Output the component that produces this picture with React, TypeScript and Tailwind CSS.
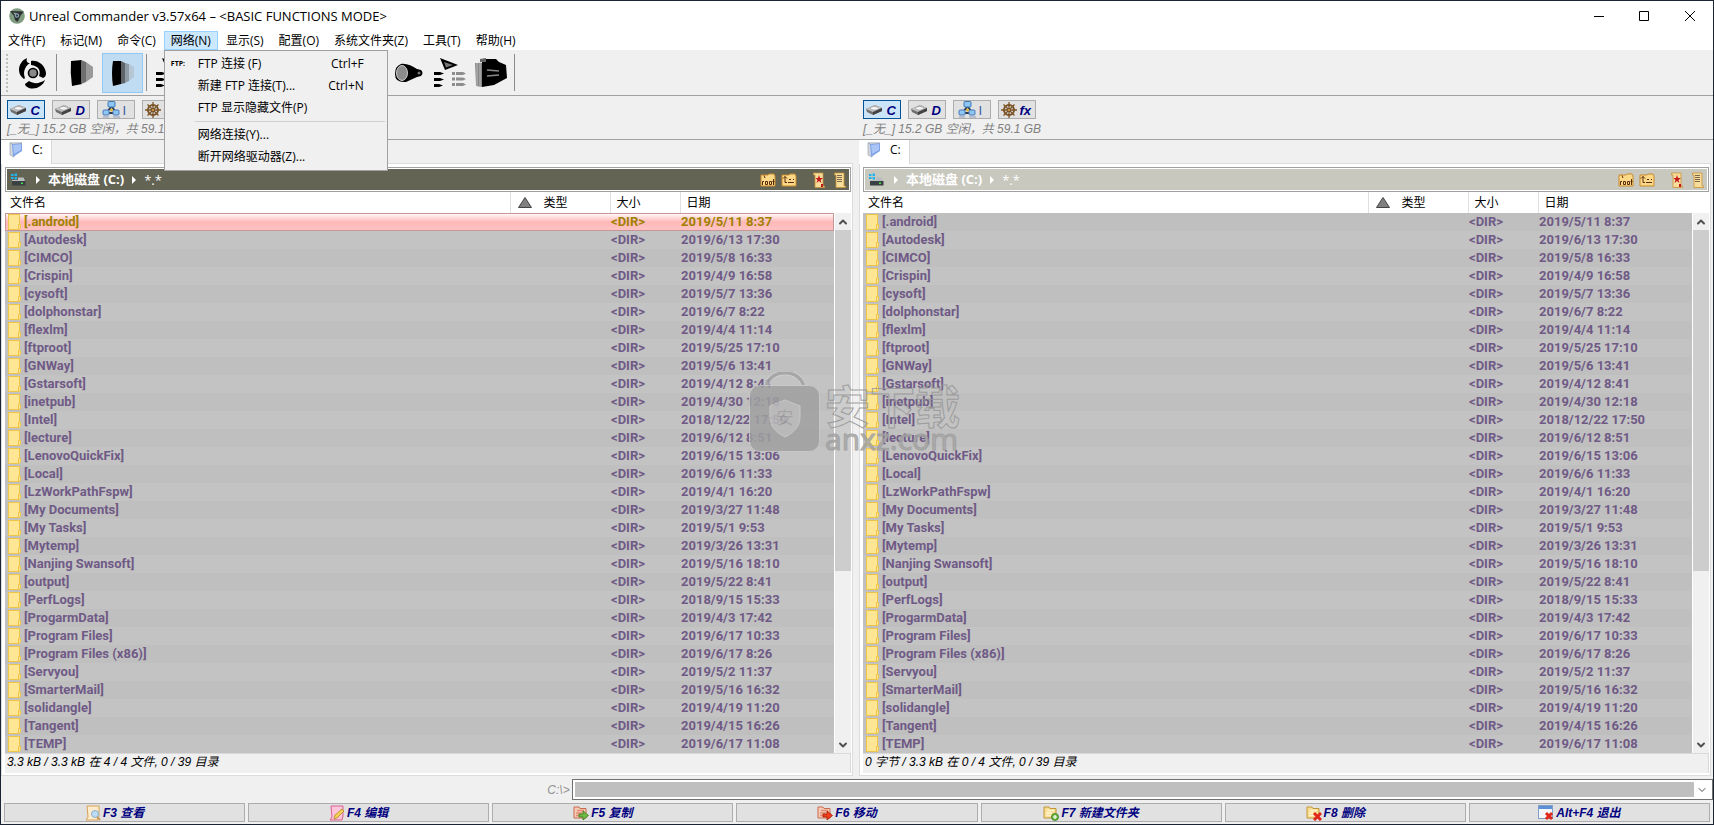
import { ChevronDown, ChevronUp } from 'lucide-react';
import React from 'react';

const menus = [
  '文件(F)',
  '标记(M)',
  '命令(C)',
  '网络(N)',
  '显示(S)',
  '配置(O)',
  '系统文件夹(Z)',
  '工具(T)',
  '帮助(H)',
];

const folders = [
  ['.android', '2019/5/11 8:37'],
  ['Autodesk', '2019/6/13 17:30'],
  ['CIMCO', '2019/5/8 16:33'],
  ['Crispin', '2019/4/9 16:58'],
  ['cysoft', '2019/5/7 13:36'],
  ['dolphonstar', '2019/6/7 8:22'],
  ['flexlm', '2019/4/4 11:14'],
  ['ftproot', '2019/5/25 17:10'],
  ['GNWay', '2019/5/6 13:41'],
  ['Gstarsoft', '2019/4/12 8:41'],
  ['inetpub', '2019/4/30 12:18'],
  ['Intel', '2018/12/22 17:50'],
  ['lecture', '2019/6/12 8:51'],
  ['LenovoQuickFix', '2019/6/15 13:06'],
  ['Local', '2019/6/6 11:33'],
  ['LzWorkPathFspw', '2019/4/1 16:20'],
  ['My Documents', '2019/3/27 11:48'],
  ['My Tasks', '2019/5/1 9:53'],
  ['Mytemp', '2019/3/26 13:31'],
  ['Nanjing Swansoft', '2019/5/16 18:10'],
  ['output', '2019/5/22 8:41'],
  ['PerfLogs', '2018/9/15 15:33'],
  ['ProgarmData', '2019/4/3 17:42'],
  ['Program Files', '2019/6/17 10:33'],
  ['Program Files (x86)', '2019/6/17 8:26'],
  ['Servyou', '2019/5/2 11:37'],
  ['SmarterMail', '2019/5/16 16:32'],
  ['solidangle', '2019/4/19 11:20'],
  ['Tangent', '2019/4/15 16:26'],
  ['TEMP', '2019/6/17 11:08'],
];

function AppIcon() {
  return (
    <svg width="16" height="16" viewBox="0 0 16 16">
      <circle cx="8" cy="8" r="7.8" fill="#7f9c80" />
      <path d="M1 3 15 3.500 12 7 8.500 14 6 12 5 8Z" fill="#2b3133" />
      <path d="M4 4.500 8 5 6 7Z" fill="#8fa892" />
      <circle cx="8" cy="7.5" r="2.2" fill="#8aa0a8" />
      <circle cx="8" cy="7.5" r="1" fill="#20384a" />
    </svg>
  );
}

function SwirlIcon() {
  return (
    <svg width="28" height="32" viewBox="0 0 28 32">
      <path d="M8 1C3 3 0 8 0 13c0 4 2 7 5 9l1-1C4 16 5 10 11 6 8 6 7 4 8 1Z" />
      <path d="M12 4c7-1 14 4 15 12 0 3-1 4-3 5l-4-2c2-5 0-10-8-11Z" />
      <path d="M26 23c-2 6-9 10-16 8-3-1-4-3-4-4l4-3c5 3 10 3 16-1Z" />
      <circle cx="14" cy="16" r="4.5" fill="#888" stroke="#000" strokeWidth="1.6" />
    </svg>
  );
}

function LensIcon() {
  return (
    <svg width="24" height="28" viewBox="0 0 24 28">
      <path d="M1 2Q0 14 2 27L12 25V1Z" />
      <path d="M11 1 16 3V23L11 25Z" fill="#6f6f6f" />
      <path d="M16 3 23 8V18L16 23Z" fill="#999" />
    </svg>
  );
}

function LensActiveIcon() {
  return (
    <svg width="24" height="28" viewBox="0 0 24 28">
      <path d="M2 2Q0 14 2 27L10 25V2Z" />
      <path d="M10 2 14 4V24L10 25Z" fill="#5f6468" />
      <path d="M14 4 18 5V22L14 24Z" fill="#8f9ba5" />
      <path d="M18 5 23 8V18L18 22Z" fill="#b5c6d4" />
    </svg>
  );
}

function TorchIcon() {
  return (
    <svg width="30" height="20" viewBox="0 0 30 20">
      <path d="M7 1C12 0 18 3 23 6L27 7Q30 10 27 13L23 14 12 19Q1 20 1 11 1 3 7 1Z" />
      <ellipse cx="8" cy="10" rx="5.5" ry="7.5" fill="#8c8c8c" stroke="#eee" strokeWidth="0.8" />
      <circle cx="25" cy="10" r="1.5" fill="#777" />
    </svg>
  );
}

function ListsIcon() {
  return (
    <svg width="34" height="30" viewBox="0 0 34 30">
      <path d="M7 0 25 7 12 12Z" />
      <path d="M11 4 20 7 13 9.500Z" fill="#777" />
      <path d="M1 14H7L11 15.500 7 17H1V15.500ZM1 20H7L11 21.500 7 23H1ZM1 26H6L10 27.500 6 29H1Z" />
      <path
        d="M19 14h3v3h-3ZM23 14h7l3 1.500-3 1.500h-7ZM19 19.500h3v3h-3ZM23 19.500h7l3 1.500-3 1.500h-7ZM19 25h3v3h-3ZM23 25h7l3 1.500-3 1.500h-7Z"
        fill="#8e8e8e"
      />
    </svg>
  );
}

function BagIcon() {
  return (
    <svg width="34" height="30" viewBox="0 0 34 30">
      <path d="M1 5H8V29L2 28Z" fill="#888" />
      <path d="M3 5V28M6 4V29" stroke="#bbb" />
      <path d="M8 4 12 1H22L25 4 32 7 33 20 20 27 8 29Z" />
      <path d="M6 1 12 0V4H6Z" fill="#666" />
      <path d="M13 12 25 13M13 18 25 17" stroke="#888" strokeWidth="1.6" />
    </svg>
  );
}

function DriveIcon() {
  return (
    <svg width="17" height="12" viewBox="0 0 17 12">
      <path d="M0 5 9 1 16 4V7L7 11 1 8Z" fill="#6f6f6f" />
      <path d="M0 5 9 1 16 4 7 8Z" fill="#c4c4c4" />
      <ellipse cx="8.500" cy="4.300" rx="4" ry="1.800" fill="#f5f5f5" stroke="#8c8c8c" strokeWidth="0.600" />
      <path d="M7 8 16 4V7L7 11Z" fill="#444" />
    </svg>
  );
}

function NetIcon() {
  return (
    <svg width="18" height="17" viewBox="0 0 18 17">
      <path d="M9 6 5 11M10 6 14 11M6 12H14" stroke="#2b3d4f" strokeWidth="2" />
      <rect x="6" y="0.500" width="7" height="5.500" rx="1" fill="#8ec5f2" stroke="#3d78b5" />
      <rect x="1" y="9" width="6" height="5" rx="1" fill="#8ec5f2" stroke="#4a7ab8" />
      <rect x="11" y="9" width="6" height="5" rx="1" fill="#8ec5f2" stroke="#4a7ab8" />
      <path d="M1 16H7M11 16H18" stroke="#aab4c8" strokeWidth="1.500" />
      <circle cx="9.500" cy="9" r="1.500" fill="#e0b030" />
    </svg>
  );
}

function WheelIcon() {
  return (
    <svg width="16" height="16" viewBox="0 0 16 16" fill="none" stroke="#7a5326">
      <path d="M8 0V16M0 8H16M2.500 2.500 13.500 13.500M13.500 2.500 2.500 13.500" strokeWidth="1.300" />
      <circle cx="8" cy="8" r="5" strokeWidth="2" />
      <circle cx="8" cy="8" r="1.600" fill="#d09a50" />
    </svg>
  );
}

function TabIcon() {
  return (
    <svg width="15" height="16" viewBox="0 0 15 16">
      <path d="M1 1 5 3V15L1 13Z" fill="#d5d8dd" stroke="#9aa3ad" strokeWidth="0.700" />
      <path d="M3 2 13 1V9L4 15Z" fill="#7ea2e8" />
      <path d="M4 3 12 2V8L5 12Z" fill="#a9c4f5" />
      <path d="M1 1H13" stroke="#9aa3ad" />
    </svg>
  );
}

function SystemDriveIcon() {
  return (
    <svg width="15" height="13" viewBox="0 0 15 13">
      <path d="M0 1h2.500v2H0ZM3.500 0.500H6V3H3.500ZM0 4h2.500v2H0ZM3.500 4H6v2.500H3.500Z" fill="#20b4ee" />
      <path d="M7 4.500H12.500L14 8H1V7H7Z" fill="#b9bdbf" />
      <path d="M1 8H14.500V12.500H1Z" fill="#3a3f42" />
      <path d="M10 9.500h2v1.500h-2Z" fill="#46e052" />
    </svg>
  );
}

function FolderButtonIcon({ up }: { up?: boolean }) {
  return (
    <svg width="16" height="14" viewBox="0 0 16 14">
      <path d="M1 2H8L9 1H14L15 3V13H1Z" fill="#fbd989" stroke="#c98a2c" />
      {up ? (
        <path d="M4 9.500V3.500M2 5.500 4 3.500 6 5.500M4 9.500H6M8 6.500h2M12 6.500h1M7 9.500h6" stroke="#5b2a08" fill="none" />
      ) : (
        <path
          d="M4 2.500 5 5M2.500 12V8.500H4M5.500 8.500h2v3h-2ZM9.500 8.500h2v3h-2ZM13.500 6v6M12.500 8.500h2"
          stroke="#5b2a08"
          fill="none"
        />
      )}
    </svg>
  );
}

function ScrollIcon({ star }: { star?: boolean }) {
  return (
    <svg width="12" height="16" viewBox="0 0 12 16">
      <path d="M0.500 1H10V14H11.500V15.500H2V3H0.500Z" fill="#f7dc9a" stroke="#c7923a" strokeWidth="0.800" />
      {star ? (
        <path d="M6 3 7 6 10 6 7.500 8 8.500 11 6 9 3.500 11 4.500 8 2.500 6 5 6ZM8 12h2v3H8Z" fill="#c4141c" />
      ) : (
        <path d="M3 3.500H8M3 5.500H8M3 7.500H8M3 9.500H8" stroke="#7a6648" />
      )}
    </svg>
  );
}

function FolderIcon() {
  return (
    <svg className="shrink-0" width="13" height="16" viewBox="0 0 13 16">
      <rect x="0.500" y="0.500" width="11" height="15" fill="#ffe694" stroke="#eec549" />
      <path d="M10.500 15.500V10.500H12.500V14L11.500 15.500Z" fill="#ffe694" stroke="#eec549" />
    </svg>
  );
}

function PageIcon({ edit }: { edit?: boolean }) {
  return (
    <svg width="16" height="16" viewBox="0 0 16 16">
      <path
        d="M2 1H14V11L13 15H1L3 12Z"
        fill={edit ? '#fbc6da' : '#fdeccb'}
        stroke={edit ? '#dc5f95' : '#d6a25c'}
      />
      {edit ? (
        <path d="M5 14 6 10 13 4 15 6 8 13Z" fill="#f3cf58" stroke="#b38a28" strokeWidth="0.800" />
      ) : (
        <>
          <circle cx="10" cy="9" r="3.500" fill="#bcdcf5" stroke="#8fb1cc" />
          <path d="M12 12 15 15" stroke="#c79a5c" strokeWidth="2" />
        </>
      )}
    </svg>
  );
}

function FileOpIcon({ kind }: { kind: string }) {
  const red = kind === 'copy' || kind === 'move';
  return (
    <svg width="16" height="16" viewBox="0 0 16 16">
      <path
        d="M1 2H6L7 3.500H13V13H1Z"
        fill={red ? '#f6cbb8' : '#f8dc90'}
        stroke={red ? '#c96a4c' : '#c09638'}
      />
      <path d="M4 5.500H11M3 8H9M3 10.500H8" stroke={red ? '#e08a70' : '#fff3cf'} strokeWidth="1.500" />
      {kind === 'copy' && (
        <path d="M6 9H10V6L15.500 10.500 10 15V12H6Z" fill="#6dba44" stroke="#38761d" strokeWidth="0.800" />
      )}
      {kind === 'move' && (
        <path d="M6 9H10V6L15.500 10.500 10 15V12H6Z" fill="#f23c1c" stroke="#a01c08" strokeWidth="0.800" />
      )}
      {kind === 'new' && (
        <>
          <circle cx="12" cy="12" r="3.500" fill="#6dba44" stroke="#38761d" strokeWidth="0.800" />
          <path d="M12 10V14M10 12H14" stroke="#fff" strokeWidth="1.200" />
        </>
      )}
      {kind === 'delete' && <path d="M8 8 15 15M15 8 8 15" stroke="#e0281c" strokeWidth="3" />}
    </svg>
  );
}

function ExitIcon() {
  return (
    <svg width="16" height="16" viewBox="0 0 16 16">
      <rect x="0.500" y="0.500" width="14" height="13" fill="#f4f8fd" stroke="#7f9fc9" />
      <path d="M1 1H14V4H1Z" fill="#5b8fd6" />
      <path d="M8 8 14 14M14 8 8 14" stroke="#e0281c" strokeWidth="3" />
    </svg>
  );
}

function TitleBar() {
  return (
    <header className="flex h-[30px] items-center bg-white pl-2">
      <AppIcon />
      <h1 className="ml-1 text-[13px] leading-5">Unreal Commander v3.57x64 – &lt;BASIC FUNCTIONS MODE&gt;</h1>
      <div className="ml-auto flex h-full">
        <button aria-label="最小化" className="grid w-[45px] place-items-center">
          <svg width="10" height="10" viewBox="0 0 10 10">
            <path d="M0 5.500H10" stroke="#000" />
          </svg>
        </button>
        <button aria-label="最大化" className="grid w-[45px] place-items-center">
          <svg width="10" height="10" viewBox="0 0 10 10">
            <path d="M0.500 0.500H9.500V9.500H0.500Z" fill="none" stroke="#000" />
          </svg>
        </button>
        <button aria-label="关闭" className="grid w-[47px] place-items-center">
          <svg width="10" height="10" viewBox="0 0 10 10">
            <path d="M0 0 10 10M10 0 0 10" stroke="#000" />
          </svg>
        </button>
      </div>
    </header>
  );
}

function MenuItem({ label, shortcut, icon }: { label: string; shortcut?: string; icon?: string }) {
  return (
    <li>
      <button className="flex h-[22px] w-full items-center pr-[23px]">
        <span className="w-[33px] pl-1.5 text-left text-[7px] font-bold">{icon}</span>
        {label}
        <span className="ml-auto">{shortcut}</span>
      </button>
    </li>
  );
}

function NetworkMenu() {
  return (
    <ul className="absolute top-full left-0 z-20 w-56 border border-[#a0a0a0] bg-[#f0f0f0] py-0.5 whitespace-nowrap">
      <MenuItem label="FTP 连接 (F)" shortcut="Ctrl+F" icon="FTP:" />
      <MenuItem label="新建 FTP 连接(T)..." shortcut="Ctrl+N" />
      <MenuItem label="FTP 显示隐藏文件(P)" />
      <li className="my-0.5 mr-0.5 ml-[30px] border-t border-[#d0d0d0]" />
      <MenuItem label="网络连接(Y)..." />
      <MenuItem label="断开网络驱动器(Z)..." />
    </ul>
  );
}

function MenuBar() {
  return (
    <nav className="flex h-[19px] gap-px bg-white text-xs">
      {menus.map((menu) => {
        const open = menu === '网络(N)';
        return (
          <div key={menu} className="relative flex">
            <button
              className={
                open
                  ? 'border border-[#99d1ff] bg-[#cce8ff] px-1.5 leading-4'
                  : 'border border-transparent px-1.5 leading-4'
              }
            >
              {menu}
            </button>
            {open && <NetworkMenu />}
          </div>
        );
      })}
    </nav>
  );
}

function ToolButton({ label, active, children }: { label: string; active?: boolean; children: React.ReactNode }) {
  return (
    <button
      aria-label={label}
      className={
        active
          ? 'grid h-10 w-[41px] place-items-center border border-[#90c8f6] bg-[#c0dcf3]'
          : 'grid h-10 w-[41px] place-items-center'
      }
    >
      {children}
    </button>
  );
}

function Separator() {
  return <div className="mr-1 ml-[3px] h-[37px] w-px bg-[#8c8c8c]" />;
}

function ToolBar() {
  return (
    <div className="flex h-[46px] items-center border-b border-[#a0a0a0] pl-[5px]">
      <div className="mr-1 h-[38px] border-l-2 border-dotted border-[#bdbdbd]" />
      <ToolButton label="刷新">
        <SwirlIcon />
      </ToolButton>
      <Separator />
      <ToolButton label="简要">
        <LensIcon />
      </ToolButton>
      <ToolButton label="详细" active>
        <LensActiveIcon />
      </ToolButton>
      <Separator />
      <ToolButton label="排序">
        <ListsIcon />
      </ToolButton>
      <ToolButton label="打包">
        <BagIcon />
      </ToolButton>
      <Separator />
      <ToolButton label="解包">
        <BagIcon />
      </ToolButton>
      <Separator />
      <ToolButton label="比较">
        <ListsIcon />
      </ToolButton>
      <Separator />
      <ToolButton label="同步">
        <SwirlIcon />
      </ToolButton>
      <Separator />
      <ToolButton label="搜索">
        <TorchIcon />
      </ToolButton>
      <ToolButton label="批量重命名">
        <ListsIcon />
      </ToolButton>
      <ToolButton label="文件包">
        <BagIcon />
      </ToolButton>
      <Separator />
    </div>
  );
}

function DriveButton({ label, active, icon }: { label: string; active?: boolean; icon: React.ReactNode }) {
  return (
    <button
      className={
        active
          ? 'flex h-[19px] w-[38px] items-center justify-between border border-[#00549a] bg-[#cce4f7] pr-1 pl-0.5'
          : 'flex h-[19px] w-[38px] items-center justify-between border border-[#adadad] bg-[#e1e1e1] pr-1 pl-0.5'
      }
    >
      {icon}
      <span className="pt-0.5 text-[13px] leading-4 font-bold text-[#000080] italic">{label}</span>
    </button>
  );
}

function DriveBar() {
  return (
    <div className="h-11 border-b border-[#a0a0a0] pt-1 pl-1.5 font-['Liberation_Sans','Noto_Sans_CJK_SC',sans-serif]">
      <div className="flex gap-[7px]">
        <DriveButton label="C" active icon={<DriveIcon />} />
        <DriveButton label="D" icon={<DriveIcon />} />
        <button className="flex h-[19px] w-[38px] items-center justify-between border border-[#adadad] bg-[#e1e1e1] pr-2 pl-1">
          <NetIcon />
          <span className="pt-0.5 text-[13px] leading-4 text-[#3c5fa0]">I</span>
        </button>
        <DriveButton label="fx" icon={<WheelIcon />} />
      </div>
      <p className="text-xs leading-5 text-[#808080] italic">[_无_] 15.2 GB 空闲，共 59.1 GB</p>
    </div>
  );
}

function PathBar({ active }: { active?: boolean }) {
  return (
    <div className="border border-[#a0a0a0] bg-white p-px">
      <div
        className={
          active
            ? 'flex h-[21px] items-center bg-[#646454] pr-[3px] pl-1 text-white'
            : 'flex h-[21px] items-center bg-[#c8c8be] pr-[3px] pl-1 text-white'
        }
      >
        <SystemDriveIcon />
        <span className="ml-2.5 border-y-4 border-l-4 border-y-transparent border-l-white" />
        <span className="ml-2 pb-0.5 text-[13px] leading-4 font-bold">本地磁盘 (C:)</span>
        <span className="ml-2 border-y-4 border-l-4 border-y-transparent border-l-white" />
        <span className="ml-2 text-[13px] leading-4">*.*</span>
        <div className="ml-auto flex items-center">
          <button aria-label="根目录">
            <FolderButtonIcon />
          </button>
          <button aria-label="上级目录" className="ml-[5px]">
            <FolderButtonIcon up />
          </button>
          <button aria-label="收藏夹" className="ml-4">
            <ScrollIcon star />
          </button>
          <button aria-label="历史" className="ml-[9px]">
            <ScrollIcon />
          </button>
        </div>
      </div>
    </div>
  );
}

function FileList({ active }: { active?: boolean }) {
  return (
    <div className="flex bg-white">
      <table className="w-full flex-1 table-fixed border-collapse text-left font-['Roboto','Noto_Sans_CJK_SC',sans-serif]">
        <colgroup>
          <col className="w-[505px]" />
          <col className="w-[100px]" />
          <col className="w-[70px]" />
          <col />
        </colgroup>
        <thead className="text-xs">
          <tr className="h-[21px]">
            <th className="p-0 pl-[5px] font-normal">文件名</th>
            <th className="border-l border-[#e0e0e0] p-0 pl-[7px] font-normal">
              <span className="flex items-center gap-3">
                <svg width="14" height="11" viewBox="0 0 14 11">
                  <path d="M7 0.500 13.500 10.500H0.500Z" fill="#808080" stroke="#444" />
                </svg>
                类型
              </span>
            </th>
            <th className="border-l border-[#e0e0e0] p-0 pl-1.5 font-normal">大小</th>
            <th className="border-l border-[#e0e0e0] p-0 pl-1.5 font-normal">日期</th>
          </tr>
        </thead>
        <tbody className="text-[13px] leading-4 font-bold text-[#6f5a86]">
          {folders.map(([name, date], i) => (
            <tr
              key={name}
              className={
                active && i === 0
                  ? 'h-[18px] bg-linear-to-b from-white via-[#ffb8b8] to-[#ffc4c4] text-[#a08000] outline -outline-offset-1 outline-[#c89696]'
                  : 'h-[18px] odd:bg-[#bfbfbf] even:bg-[#c3c3c3]'
              }
            >
              <td className="p-0 pl-[3px]">
                <span className="flex items-center gap-[3px]">
                  <FolderIcon />[{name}]
                </span>
              </td>
              <td className="p-0" />
              <td className="p-0 pl-px">&lt;DIR&gt;</td>
              <td className="p-0 pl-px whitespace-nowrap">{date}</td>
            </tr>
          ))}
        </tbody>
      </table>
      <div className="mt-[21px] ml-px flex w-4 flex-col bg-[#f0f0f0] text-[#505050]">
        <button aria-label="向上滚动" className="grid h-[17px] place-items-center">
          <ChevronUp size={12} strokeWidth={4} />
        </button>
        <div className="h-[341px] bg-[#cdcdcd]" />
        <button aria-label="向下滚动" className="mt-auto grid h-[17px] place-items-center">
          <ChevronDown size={12} strokeWidth={4} />
        </button>
      </div>
    </div>
  );
}

function Panel({ active, status }: { active?: boolean; status: string }) {
  return (
    <section>
      <div className="flex h-[23px] items-start">
        <a
          href="#c"
          className="relative flex h-6 items-center gap-2 border-r border-[#d9d9d9] bg-white px-2 pb-1 text-xs"
        >
          <TabIcon />
          C:
        </a>
      </div>
      <div className="border border-[#dcdcdc] bg-white pt-[3px] pr-px pb-0.5 pl-[3px]">
        <PathBar active={active} />
        <FileList active={active} />
        <p className="h-5 border-t border-r border-[#d9d9d9] bg-[#f0f0f0] pl-0.5 font-['Liberation_Sans','Noto_Sans_CJK_SC',sans-serif] text-xs leading-4 italic">
          {status}
        </p>
      </div>
    </section>
  );
}

function CommandLine() {
  return (
    <div className="mt-[3px] flex h-[21px] items-center">
      <label
        htmlFor="command"
        className="w-1/3 pr-0.5 text-right font-['Liberation_Sans',sans-serif] text-xs text-[#909090] italic"
      >
        C:\&gt;
      </label>
      <div className="flex h-full flex-1 border border-[#707070] bg-white p-0.5">
        <input id="command" className="min-w-0 flex-1 bg-[#bfbfbf] px-1 text-xs outline-none" />
        <button aria-label="命令历史" className="grid w-4 place-items-center text-[#505050]">
          <ChevronDown size={12} strokeWidth={2} />
        </button>
      </div>
    </div>
  );
}

function FunctionKeys() {
  const keys = [
    { label: 'F3 查看', icon: <PageIcon /> },
    { label: 'F4 编辑', icon: <PageIcon edit /> },
    { label: 'F5 复制', icon: <FileOpIcon kind="copy" /> },
    { label: 'F6 移动', icon: <FileOpIcon kind="move" /> },
    { label: 'F7 新建文件夹', icon: <FileOpIcon kind="new" /> },
    { label: 'F8 删除', icon: <FileOpIcon kind="delete" /> },
    { label: 'Alt+F4 退出', icon: <ExitIcon /> },
  ];
  return (
    <footer className="mt-[3px] grid grid-cols-7 gap-[3px] px-[3px] font-['Liberation_Sans','Noto_Sans_CJK_SC',sans-serif]">
      {keys.map((key) => (
        <button
          key={key.label}
          className="flex h-[19px] items-center justify-center gap-0.5 border border-[#adadad] bg-[#e1e1e1] pr-5 text-xs leading-4 font-bold text-[#000080] italic"
        >
          {key.icon}
          {key.label}
        </button>
      ))}
    </footer>
  );
}

function Watermark() {
  return (
    <div className="pointer-events-none absolute top-[371px] left-[748px] z-10 flex gap-1 opacity-85">
      <svg width="72" height="82" viewBox="0 0 72 82">
        <path d="M17 15C21-4 51-4 55 15" fill="none" stroke="#d8d8d8" strokeWidth="5" />
        <path d="M17 15C21-4 51-4 55 15" fill="none" stroke="#a3a3a3" strokeWidth="3.500" />
        <rect x="0.500" y="13.500" width="70" height="66" rx="10" fill="#a0a0a0" stroke="#c9c9c9" />
        <path d="M36 28 51 34V45C51 55 44 61 36 65 28 61 21 55 21 45V34Z" fill="#b9b9b9" stroke="#c9c9c9" />
        <text x="36" y="52" textAnchor="middle" fontSize="17" fill="#a0a0a0">
          安
        </text>
      </svg>
      <div className="text-transparent">
        <p className="mt-3 text-[45px] leading-[45px] font-bold [-webkit-text-stroke:1px_#969696]">安下载</p>
        <p className="text-[30px] leading-5 text-[#a8a8a8] [-webkit-text-stroke:1px_#9c9c9c]">anxz.com</p>
      </div>
    </div>
  );
}

function App() {
  return (
    <div className="relative flex min-h-screen flex-col border border-[#1b2433] bg-[#f0f0f0] font-['Open_Sans','Noto_Sans_CJK_SC',sans-serif] text-black">
      <TitleBar />
      <MenuBar />
      <ToolBar />
      <div className="grid grid-cols-2">
        <DriveBar />
        <DriveBar />
      </div>
      <main className="grid grid-cols-2 gap-1.5 pr-0.5">
        <Panel active status="3.3 kB / 3.3 kB 在 4 / 4 文件, 0 / 39 目录" />
        <Panel status="0 字节 / 3.3 kB 在 0 / 4 文件, 0 / 39 目录" />
      </main>
      <CommandLine />
      <FunctionKeys />
      <Watermark />
    </div>
  );
}

export default App;
